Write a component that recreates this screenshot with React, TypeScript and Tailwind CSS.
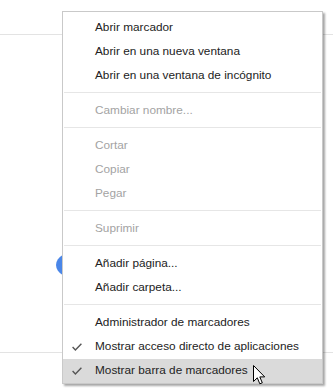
import React from "react";

type Item =
  | { type: "item"; label: string; disabled?: boolean; checked?: boolean; hover?: boolean }
  | { type: "sep" };

const items: Item[] = [
  { type: "item", label: "Abrir marcador" },
  { type: "item", label: "Abrir en una nueva ventana" },
  { type: "item", label: "Abrir en una ventana de incógnito" },
  { type: "sep" },
  { type: "item", label: "Cambiar nombre...", disabled: true },
  { type: "sep" },
  { type: "item", label: "Cortar", disabled: true },
  { type: "item", label: "Copiar", disabled: true },
  { type: "item", label: "Pegar", disabled: true },
  { type: "sep" },
  { type: "item", label: "Suprimir", disabled: true },
  { type: "sep" },
  { type: "item", label: "Añadir página..." },
  { type: "item", label: "Añadir carpeta..." },
  { type: "sep" },
  { type: "item", label: "Administrador de marcadores" },
  { type: "item", label: "Mostrar acceso directo de aplicaciones", checked: true },
  { type: "item", label: "Mostrar barra de marcadores", checked: true, hover: true },
];

function Check() {
  return (
    <div className="w-[32px] flex justify-start pl-[9px] -ml-[32px]">
      <svg width="10" height="8" viewBox="0 0 10 8">
        <path d="M0.6 4 L3.4 6.9 L9.4 0.8" fill="none" stroke="#555" strokeWidth="1.4" />
      </svg>
    </div>
  );
}

function Cursor() {
  return (
    <svg width="13" height="21" viewBox="0 0 13 21" className="absolute left-[190px] top-[6px]">
      <path
        d="M0.5 0.5 L0.5 16.5 L4.3 12.8 L6.8 18.8 L9.3 17.8 L6.8 11.9 L11.7 11.9 Z"
        fill="#fff"
        stroke="#000"
        strokeWidth="1"
        strokeLinejoin="round"
      />
    </svg>
  );
}

export default function App() {
  return (
    <div
      className="relative w-[333px] h-[391px] overflow-hidden bg-white"
      style={{ fontFamily: '"Liberation Sans", Arial, sans-serif' }}
    >
      {/* background page */}
      <div className="flex flex-col">
        <div className="h-[34px]" />
        <div className="h-px bg-[#e3e3e3]" />
        <div className="h-[215px]" />
        <div className="flex justify-between h-[30px]">
          <div className="ml-[56px] w-[50px] h-[30px] rounded-[50%] bg-[#4a86e8]" />
          <div className="flex flex-col justify-between py-[20px] mr-[10px]">
            <div className="w-[3px] h-[3px] rounded-full bg-[#b04040]" />
          </div>
        </div>
        <div className="h-[72px]" />
        <div className="h-px bg-[#e3e3e3]" />
      </div>

      {/* context menu */}
      <div className="absolute left-[62px] top-[11px] w-[261px] h-[373px] bg-white border border-[#c9c9c9] shadow-[2px_2px_2px_rgba(0,0,0,0.35)] pt-[4px] text-[11.8px] leading-none">
        {items.map((it, i) =>
          it.type === "sep" ? (
            <div key={i} className="h-[11px] pt-[4px] px-[1px]">
              <div className="h-px bg-[#e6e6e6]" />
            </div>
          ) : (
            <div
              key={i}
              className={
                "relative h-[24px] flex items-center pl-[32px] " +
                (it.hover ? "bg-[#dadada] " : "") +
                (it.disabled ? "text-[#a3a3a3]" : "text-[#222222]")
              }
            >
              {it.checked && <Check />}
              <span>{it.label}</span>
              {it.hover && <Cursor />}
            </div>
          )
        )}
      </div>
    </div>
  );
}
